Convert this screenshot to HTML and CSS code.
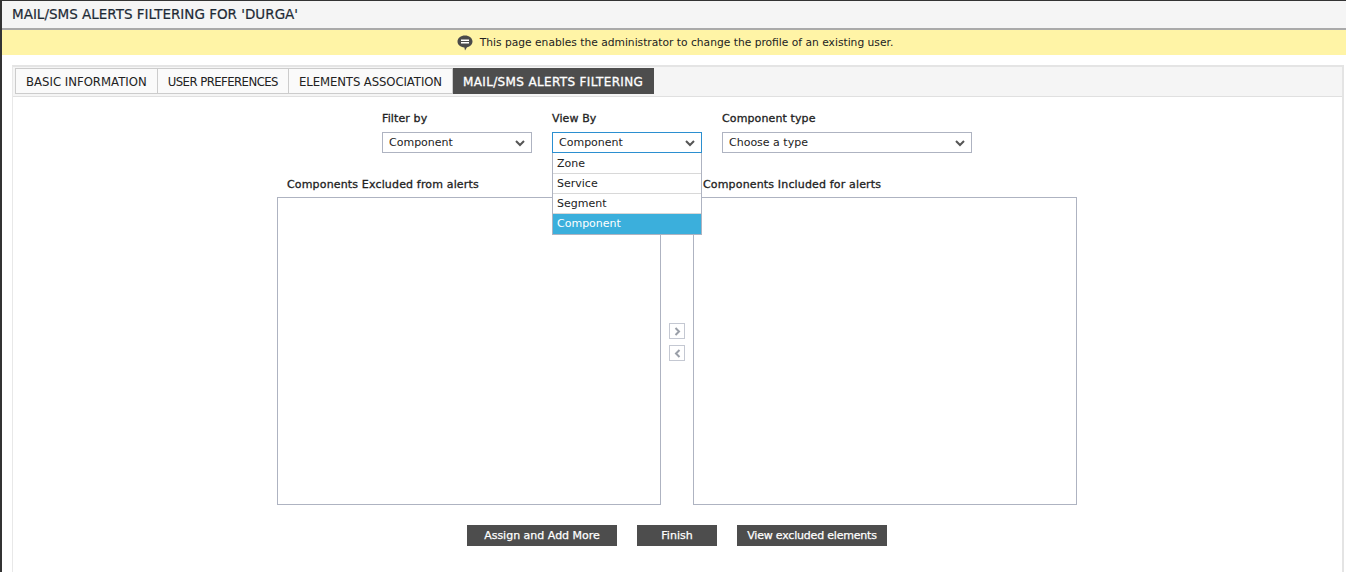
FILE: index.html
```html
<!DOCTYPE html>
<html lang="en">
<head>
<meta charset="utf-8">
<title>Mail/SMS Alerts Filtering</title>
<link rel="stylesheet" href="styles.css">
</head>
<body>
<div class="page">
  <h1 class="title">MAIL/SMS ALERTS FILTERING FOR 'DURGA'</h1>
  <div class="notice">
    <svg class="notice-icon" width="16" height="16" viewBox="0 0 16 16"><path d="M8 .5c4.2 0 7.5 2.6 7.500 6 0 3-2.500 5.300-5.500 5.800L8 15.500l-.6-3.100C3.300 12.200.5 9.700.5 6.500c0-3.400 3.300-6 7.500-6z" fill="#4a4a4a"/><rect x="4" y="4.500" width="8" height="1.500" fill="#fff"/><rect x="4" y="7" width="8" height="1.500" fill="#fff"/></svg>
    <span>This page enables the administrator to change the profile of an existing user.</span>
  </div>
  <section class="panel">
    <nav class="tabs">
      <a class="tab tab-first">BASIC INFORMATION</a>
      <a class="tab tab-prefs">USER PREFERENCES</a>
      <a class="tab tab-elements">ELEMENTS ASSOCIATION</a>
      <a class="tab tab-active">MAIL/SMS ALERTS FILTERING</a>
    </nav>
    <div class="content">
      <div class="filters">
        <div class="field">
          <label class="label">Filter by</label>
          <div class="select"><span>Component</span><svg class="chev" width="10" height="7" viewBox="0 0 10 7"><path d="M1 1l4 4 4-4" fill="none" stroke="#555" stroke-width="2"/></svg></div>
        </div>
        <div class="field">
          <label class="label">View By</label>
          <div class="select select-open"><span>Component</span><svg class="chev" width="10" height="7" viewBox="0 0 10 7"><path d="M1 1l4 4 4-4" fill="none" stroke="#555" stroke-width="2"/></svg>
            <ul class="menu">
              <li>Zone</li>
              <li>Service</li>
              <li>Segment</li>
              <li class="selected">Component</li>
            </ul>
          </div>
        </div>
        <div class="field field-wide">
          <label class="label">Component type</label>
          <div class="select"><span>Choose a type</span><svg class="chev" width="10" height="7" viewBox="0 0 10 7"><path d="M1 1l4 4 4-4" fill="none" stroke="#555" stroke-width="2"/></svg></div>
        </div>
      </div>
      <div class="lists">
        <div class="list-col">
          <div class="list-title">Components Excluded from alerts</div>
          <div class="listbox"></div>
        </div>
        <div class="movers">
          <button class="mover"><svg width="7" height="9" viewBox="0 0 7 9"><path d="M1.500 1l3.500 3.500L1.500 8" fill="none" stroke="#9a9fa8" stroke-width="2"/></svg></button>
          <button class="mover"><svg width="7" height="9" viewBox="0 0 7 9"><path d="M5.500 1L2 4.500 5.500 8" fill="none" stroke="#9a9fa8" stroke-width="2"/></svg></button>
        </div>
        <div class="list-col">
          <div class="list-title">Components Included for alerts</div>
          <div class="listbox"></div>
        </div>
      </div>
      <div class="actions">
        <button class="btn btn-assign">Assign and Add More</button>
        <button class="btn btn-finish">Finish</button>
        <button class="btn btn-view">View excluded elements</button>
      </div>
    </div>
  </section>
</div>
</body>
</html>
```
FILE: styles.css
```css
* { box-sizing: border-box; }
html, body { margin: 0; padding: 0; height: 100%; overflow: hidden; background: #fff; }
body { font-family: "DejaVu Sans", sans-serif; font-size: 11px; color: #222; }
.page { height: 572px; border-top: 1px solid #333; border-left: 2px solid #333; }
.title {
  margin: 0; height: 29px; padding: 0 0 0 10px; background: #f5f5f5;
  border-bottom: 2px solid #aaa; font-size: 13.5px; font-weight: 400; line-height: 27px; color: #1e2a35;
  -webkit-text-stroke: 0.2px #1e2a35;
}
.notice {
  height: 25px; background: #fff4a6; display: flex; align-items: center; justify-content: center;
  gap: 7px; font-size: 10.7px; color: #222; padding-left: 2px;
}
.panel {
  margin: 10px 2px 0 10px; height: 520px; border-top: 2px solid #e4e4e4; border-right: 2px solid #e4e4e4; border-left: 1px solid #e8e8e8;
}
.tabs {
  height: 30px; background: #f5f5f5; border-bottom: 1px solid #e0e0e0; display: flex; padding: 0 0 0 2px; align-items: flex-start;
}
.tab {
  height: 26px; padding: 0 10px; font-size: 11.7px; line-height: 27px; color: #222;
  border: 1px solid #ccc; border-left: 0; background: #fafafa; margin-top: 1px;
}
.tab-first { border-left: 1px solid #ccc; }
.tab-prefs { letter-spacing: -0.55px; }
.tab-elements { letter-spacing: -0.1px; }
.tab-active {
  background: #4d4d4d; color: #fff; font-size: 12px; border-color: #4d4d4d; letter-spacing: 0.35px;
  -webkit-text-stroke: 0.3px #fff;
}
.content { background: #fff; }
.filters { display: flex; padding: 15px 0 0 369px; gap: 20px; }
.field { width: 150px; }
.field-wide { width: 250px; }
.label { display: block; -webkit-text-stroke: 0.3px #222; font-size: 11px; line-height: 14px; color: #222; margin-bottom: 6px; letter-spacing: 0.12px; }
.select {
  position: relative; height: 21px; border: 1px solid #aeb3c1; background: #fff; display: flex; align-items: center;
  justify-content: space-between; padding: 0 6px 0 6px; color: #222;
}
.select-open { border-color: #2b8fd0; }
.chev { display: block; margin-top: 2px; }
.menu {
  position: absolute; left: -1px; top: 20px; width: 150px; margin: 0; padding: 1px 0 0; list-style: none; background: #fff;
  border: 1px solid #aeb3c1; border-top: 0; z-index: 2;
}
.menu li { height: 20px; line-height: 19px; padding-left: 4px; border-bottom: 1px solid #d8d8d8; }
.menu li.selected { background: #3bafdc; color: #fff; border-bottom: 0; line-height: 20px; }
.lists { display: flex; margin: 24px 0 0 264px; }
.list-col { width: 384px; display: flex; flex-direction: column; }
.list-title { -webkit-text-stroke: 0.3px #222; height: 14px; line-height: 16px; margin-bottom: 6px; padding-left: 10px; letter-spacing: 0.16px; }
.listbox { height: 308px; border: 1px solid #aeb3c1; background: #fff; }
.movers { width: 32px; display: flex; flex-direction: column; align-items: center; gap: 6px; padding-top: 146px; }
.mover { width: 16px; height: 16px; padding: 0; border: 1px solid #c4c8d2; background: #fff; display: flex; align-items: center; justify-content: center; }
.actions { display: flex; margin: 20px 0 0 454px; gap: 20px; }
.btn { height: 21px; padding: 0; border: 0; background: #4d4d4d; color: #fff; font-family: inherit; font-size: 11px; -webkit-text-stroke: 0.25px #fff; white-space: nowrap; }
.btn-assign { width: 150px; }
.btn-finish { width: 80px; }
.btn-view { width: 150px; letter-spacing: -0.2px; }
```
